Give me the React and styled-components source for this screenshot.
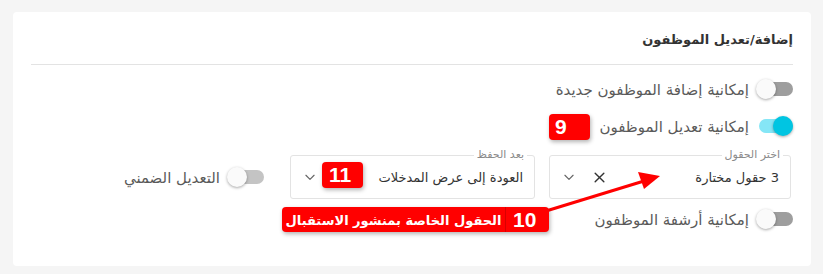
import React from "react";
import styled, { createGlobalStyle } from "styled-components";

const Global = createGlobalStyle`
  html, body { margin: 0; padding: 0; background: #f5f5f5; }
  body { font-family: "DejaVu Sans", "Noto Sans", sans-serif; }
  * { box-sizing: border-box; }
`;

const Page = styled.div`
  position: relative;
  width: 823px;
  height: 274px;
  padding: 12px 12px 8px 13px;
  background: #f5f5f5;
`;

const Card = styled.section`
  direction: rtl;
  background: #fff;
  border-radius: 4px;
  height: 254px;
  padding: 18px 18px 0 18px;
  display: flex;
  flex-direction: column;
`;

const Title = styled.h2`
  margin: 0;
  height: 20px;
  line-height: 20px;
  font-size: 13px;
  font-weight: bold;
  color: #333;
`;

const Divider = styled.hr`
  margin: 14px 0 6px;
  border: 0;
  border-top: 1px solid #e3e3e3;
  height: 0;
`;

const Row = styled.div`
  display: flex;
  align-items: center;
  height: 36px;
  gap: 10px;
  margin-top: ${(p) => p.$mt || 0}px;
`;

const Label = styled.span`
  font-size: 15px;
  color: #5a5a5a;
  white-space: nowrap;
  padding-top: 2px;
`;

const Track = styled.span`
  position: relative;
  display: inline-block;
  width: 34px;
  height: 14px;
  border-radius: 7px;
  background: ${(p) => (p.$on ? "#85e6f6" : p.$light ? "#c4c4c4" : "#9e9e9e")};
  flex: none;
`;

const Knob = styled.span`
  position: absolute;
  top: -3px;
  ${(p) => (p.$on ? "left: 14px;" : "left: -3px;")}
  width: 20px;
  height: 20px;
  border-radius: 50%;
  background: ${(p) => (p.$on ? "#00c5e2" : "#fafafa")};
  box-shadow: 0 1px 3px rgba(0, 0, 0, 0.35);
`;

const Toggle = ({ on, light }) => (
  <Track $on={on} $light={light} dir="ltr">
    <Knob $on={on} />
  </Track>
);

const FieldsRow = styled.div`
  display: flex;
  align-items: center;
  gap: 14px;
  margin-top: 11px;
  margin-right: 2px;
`;

const Field = styled.div`
  position: relative;
  width: ${(p) => p.$w}px;
  height: 44px;
  border: 1px solid #e3e3e3;
  border-radius: 3px;
  display: flex;
  align-items: center;
  padding: 0 11px 0 9px;
  gap: 10px;
`;

const Legend = styled.span`
  position: absolute;
  top: -8px;
  right: 7px;
  padding: 0 3px;
  background: #fff;
  font-size: 11px;
  line-height: 14px;
  color: #8a8a8a;
`;

const Value = styled.span`
  flex: 1;
  font-size: 13px;
  color: #333;
  white-space: nowrap;
`;

const IconBtn = styled.span`
  display: flex;
  align-items: center;
  justify-content: center;
  width: 20px;
  height: 20px;
  color: #555;
`;

const Inline = styled.div`
  display: flex;
  align-items: center;
  gap: 10px;
  margin-right: 12px;
`;

const Overlay = styled.div`
  position: absolute;
  left: ${(p) => p.$x}px;
  top: ${(p) => p.$y}px;
`;

const Badge = styled.div`
  width: ${(p) => p.$w}px;
  height: 26px;
  background: #ff0000;
  border-radius: 4px;
  color: #fff;
  font-family: "Liberation Sans", Arial, sans-serif;
  font-weight: bold;
  font-size: 21px;
  line-height: 26px;
  padding-left: ${(p) => p.$pl}px;
  box-shadow: 1px 2px 4px rgba(0, 0, 0, 0.3);
`;

const LongBadge = styled.div`
  display: flex;
  width: 267px;
  height: 25px;
  background: #ff0000;
  border-radius: 4px;
  box-shadow: 1px 2px 4px rgba(0, 0, 0, 0.3);
  color: #fff;
  overflow: hidden;
`;

const LongText = styled.span`
  direction: rtl;
  flex: 1;
  min-width: 0;
  text-align: center;
  font-size: 13px;
  font-weight: bold;
  line-height: 25px;
  white-space: nowrap;
  padding-top: 1px;
`;

const LongNum = styled.span`
  flex: none;
  width: 44px;
  border-left: 1px solid rgba(180, 0, 0, 0.5);
  font-family: "Liberation Sans", Arial, sans-serif;
  font-size: 21px;
  font-weight: bold;
  line-height: 25px;
  padding-left: 7px;
`;

const Arrow = styled.svg`
  position: absolute;
  left: 0;
  top: 0;
  pointer-events: none;
`;

const Chevron = () => (
  <svg width="14" height="14" viewBox="0 0 24 24" fill="none" stroke="#666" strokeWidth="2" strokeLinecap="round" strokeLinejoin="round">
    <path d="M5 9l7 7 7-7" />
  </svg>
);

const Cross = () => (
  <svg width="13" height="13" viewBox="0 0 24 24" fill="none" stroke="#333" strokeWidth="2.6" strokeLinecap="round">
    <path d="M4 4l16 16M20 4L4 20" />
  </svg>
);

export default function App() {
  return (
    <Page>
      <Global />
      <Card>
        <Title>إضافة/تعديل الموظفون</Title>
        <Divider />
        <Row>
          <Toggle />
          <Label>إمكانية إضافة الموظفون جديدة</Label>
        </Row>
        <Row $mt={1}>
          <Toggle on />
          <Label>إمكانية تعديل الموظفون</Label>
        </Row>
        <FieldsRow>
          <Field $w={242}>
            <Legend>اختر الحقول</Legend>
            <Value>3 حقول مختارة</Value>
            <IconBtn><Cross /></IconBtn>
            <IconBtn><Chevron /></IconBtn>
          </Field>
          <Field $w={245}>
            <Legend>بعد الحفظ</Legend>
            <Value>العودة إلى عرض المدخلات</Value>
            <IconBtn><Chevron /></IconBtn>
          </Field>
          <Inline>
            <Toggle light />
            <Label>التعديل الضمني</Label>
          </Inline>
        </FieldsRow>
        <Row $mt={2}>
          <Toggle />
          <Label>إمكانية أرشفة الموظفون</Label>
        </Row>
      </Card>

      <Overlay $x={549} $y={114}>
        <Badge $w={41} $pl={6}>9</Badge>
      </Overlay>
      <Overlay $x={322} $y={162}>
        <Badge $w={41} $pl={7}>11</Badge>
      </Overlay>
      <Arrow width="823" height="274" viewBox="0 0 823 274">
        <line x1="546" y1="211" x2="644" y2="181" stroke="#ff0000" strokeWidth="3" />
        <polygon points="660,176 638,172 644,189" fill="#ff0000" />
      </Arrow>
      <Overlay $x={282} $y={207}>
        <LongBadge>
          <LongText>الحقول الخاصة بمنشور الاستقبال</LongText>
          <LongNum>10</LongNum>
        </LongBadge>
      </Overlay>
    </Page>
  );
}
